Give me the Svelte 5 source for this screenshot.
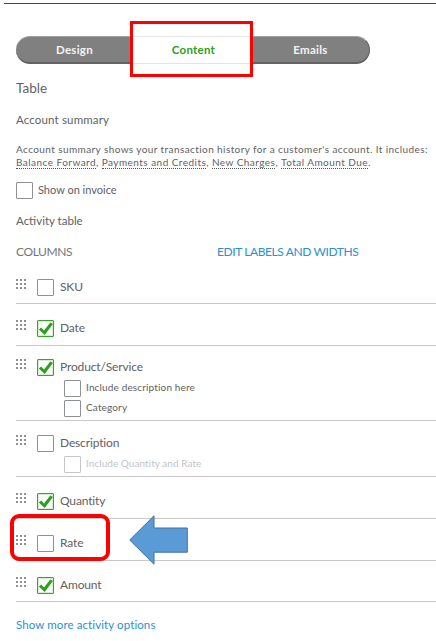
<script>
    // Tabs
    let tabs = ["Design", "Content", "Emails"];
    let active = "Content";

    // Summary
    let terms = ["Balance Forward", "Payments and Credits", "New Charges", "Total Amount Due"];
    let showOnInvoice = false;

    // Columns
    let columns = [
        { name: "SKU", checked: false, size: "short" },
        { name: "Date", checked: true },
        {
            name: "Product/Service",
            checked: true,
            size: "double",
            options: [
                { name: "Include description here", checked: false },
                { name: "Category", checked: false }
            ]
        },
        {
            name: "Description",
            checked: false,
            size: "single",
            options: [{ name: "Include Quantity and Rate", checked: false, disabled: true }]
        },
        { name: "Quantity", checked: true },
        { name: "Rate", checked: false, marked: true },
        { name: "Amount", checked: true, size: "short" }
    ];
</script>

<!-- HTML -->
<main>
    <nav>
        {#each tabs as tab}
            <button class:active={tab === active} on:click={() => (active = tab)}>{tab}</button>
        {/each}
        <span class="frame"></span>
    </nav>

    <h1>Table</h1>
    <h2 class="summary">Account summary</h2>
    <p class="about">
        <span class="intro">Account summary shows your transaction history for a customer's account. It includes:</span><br />
        {#each terms as term, i}<span class="term">{term}</span>{i < terms.length - 1 ? ", " : "."}{/each}
    </p>
    <label class="invoice">
        <input type="checkbox" bind:checked={showOnInvoice} />
        <span>Show on invoice</span>
    </label>

    <h2 class="activity">Activity table</h2>
    <header>
        <span>COLUMNS</span>
        <a href="#labels">EDIT LABELS AND WIDTHS</a>
    </header>

    <ul>
        {#each columns as column}
            <li class={column.size}>
                <svg class="grip" viewBox="0 0 11 11">
                    {#each [0, 4, 8] as y}
                        {#each [0, 4, 8] as x}
                            <rect {x} {y} width="2" height="2" />
                        {/each}
                    {/each}
                </svg>
                <div>
                    <label>
                        <span class="box">
                            <input type="checkbox" bind:checked={column.checked} />
                            {#if column.checked}
                                <svg class="tick" viewBox="0 0 17 17"><path d="M1.8 9.4 4.2 7.6 7 10.6 13.3 2.6 15.9 4 7.7 15Z" /></svg>
                            {/if}
                        </span>
                        <span>{column.name}</span>
                    </label>
                    {#each column.options || [] as option}
                        <label class="option" class:disabled={option.disabled}>
                            <input type="checkbox" disabled={option.disabled} bind:checked={option.checked} />
                            <span>{option.name}</span>
                        </label>
                    {/each}
                </div>
                {#if column.marked}
                    <span class="ring"></span>
                    <svg class="arrow" viewBox="0 0 59 50">
                        <path d="M.7 25 25 .8V13H58.3V37.2H25V49.2Z" />
                    </svg>
                {/if}
            </li>
        {/each}
    </ul>

    <a class="more" href="#more">Show more activity options</a>
</main>

<!-- CSS -->
<style>
    :global(body) {
        margin: 0;
        background: #fff;
    }
    main {
        /* Sizing */
        box-sizing: border-box;
        width: 436px;
        height: 641px;
        /* Rest */
        overflow: hidden;
        padding: 36px 0 0 16px;
        background: linear-gradient(#484848, #484848) 4px 3px / 432px 1px no-repeat;
        color: #606165;
        font-family: Lato, "Liberation Sans", sans-serif;
        font-size: 12px;
    }
    nav {
        /* Display */
        display: grid;
        grid-template-columns: 117px 119px 118px;
        position: relative;
        /* Sizing */
        box-sizing: border-box;
        width: 354px;
        height: 28px;
    }
    button {
        border: 0 solid #626262;
        border-width: 1px 0 2px;
        border-top-color: #a2a2a2;
        padding: 0;
        background: #808080;
        color: #f4f4f4;
        font: 700 11.5px Lato, sans-serif;
        letter-spacing: 0.25px;
    }
    button:first-child {
        border-radius: 14px 0 0 14px;
    }
    button:nth-child(3) {
        border-right-width: 1px;
        border-radius: 0 14px 14px 0;
    }
    button.active {
        border-color: #e6e6e6;
        border-bottom-width: 1px;
        padding: 0 0 1px 2px;
        background: #fff;
        color: #2ca01c;
    }
    .frame {
        position: absolute;
        top: -15px;
        left: 114px;
        box-sizing: border-box;
        width: 123px;
        height: 56px;
        border: 3px solid #fe0000;
        pointer-events: none;
    }
    h1,
    h2,
    p,
    ul {
        margin: 0;
        padding: 0;
        font-weight: 400;
    }
    h1 {
        margin-top: 14px;
        font-size: 13.5px;
        line-height: 20px;
    }
    h2 {
        font-size: 11.5px;
        line-height: 16px;
    }
    .summary {
        margin-top: 14px;
        letter-spacing: 0.15px;
    }
    .about {
        margin-top: 15px;
        font-size: 10px;
        line-height: 13px;
        letter-spacing: 0.41px;
        white-space: nowrap;
    }
    .term {
        display: inline-block;
        box-sizing: border-box;
        height: 13px;
        border-bottom: 1px dotted #55565a;
        letter-spacing: 0.46px;
    }
    label {
        /* Display */
        display: flex;
        align-items: flex-start;
        /* Rest */
        line-height: 15px;
        white-space: nowrap;
    }
    input {
        /* Sizing */
        box-sizing: border-box;
        flex: none;
        width: 17px;
        height: 17px;
        /* Rest */
        appearance: none;
        display: block;
        margin: 0;
        border: 1px solid #8d9096;
        border-radius: 1px;
        background: #fff;
    }
    .box input:checked {
        border-color: #35a626;
        box-shadow: inset 0 0 0 1px #d5eed2;
    }
    .invoice {
        gap: 5px;
        margin-top: 13px;
        font-size: 11px;
    }
    .activity {
        margin-top: 14px;
    }
    header {
        display: grid;
        grid-template-columns: 201px 1fr;
        margin-top: 15px;
        line-height: 16px;
        letter-spacing: -0.4px;
    }
    header span {
        color: #73757b;
    }
    a {
        color: #2b8fd0;
        text-decoration: none;
    }
    ul {
        margin-top: 3px;
        list-style: none;
    }
    li {
        /* Display */
        display: flex;
        position: relative;
        /* Sizing */
        box-sizing: border-box;
        height: 42px;
        /* Rest */
        padding-top: 16px;
        border-bottom: 1px solid #c8c8c8;
    }
    li.short {
        height: 41px;
    }
    li.double {
        height: 75px;
        padding-top: 13px;
    }
    li.single {
        height: 56px;
        padding-top: 14px;
    }
    .grip {
        width: 11px;
        height: 11px;
        margin-right: 10px;
        fill: #8f9094;
    }
    li label {
        gap: 6px;
        height: 17px;
        letter-spacing: -0.15px;
    }
    .box {
        position: relative;
    }
    .tick {
        position: absolute;
        inset: 0;
        width: 17px;
        height: 17px;
        fill: #2ca01c;
        pointer-events: none;
    }
    li .option {
        gap: 5px;
        margin: 4px 0 0 27px;
        font-size: 10px;
        letter-spacing: 0.15px;
    }
    li .option + .option {
        margin-top: 3px;
    }
    li .disabled {
        color: #c3c4c7;
        letter-spacing: 0.05px;
    }
    .disabled input {
        border-color: #c6c7ca;
    }
    .ring {
        position: absolute;
        top: -5px;
        left: -6px;
        box-sizing: border-box;
        width: 100px;
        height: 47px;
        border: 4px solid #fe0000;
        border-radius: 9px;
        z-index: 1;
        pointer-events: none;
    }
    .arrow {
        position: absolute;
        top: -4px;
        left: 112.5px;
        width: 59px;
        height: 50px;
        fill: #5b9bd5;
        stroke: #41719c;
        z-index: 1;
    }
    .more {
        display: block;
        margin-top: 15px;
        font-size: 11.5px;
        line-height: 16px;
        letter-spacing: 0.1px;
    }
</style>
